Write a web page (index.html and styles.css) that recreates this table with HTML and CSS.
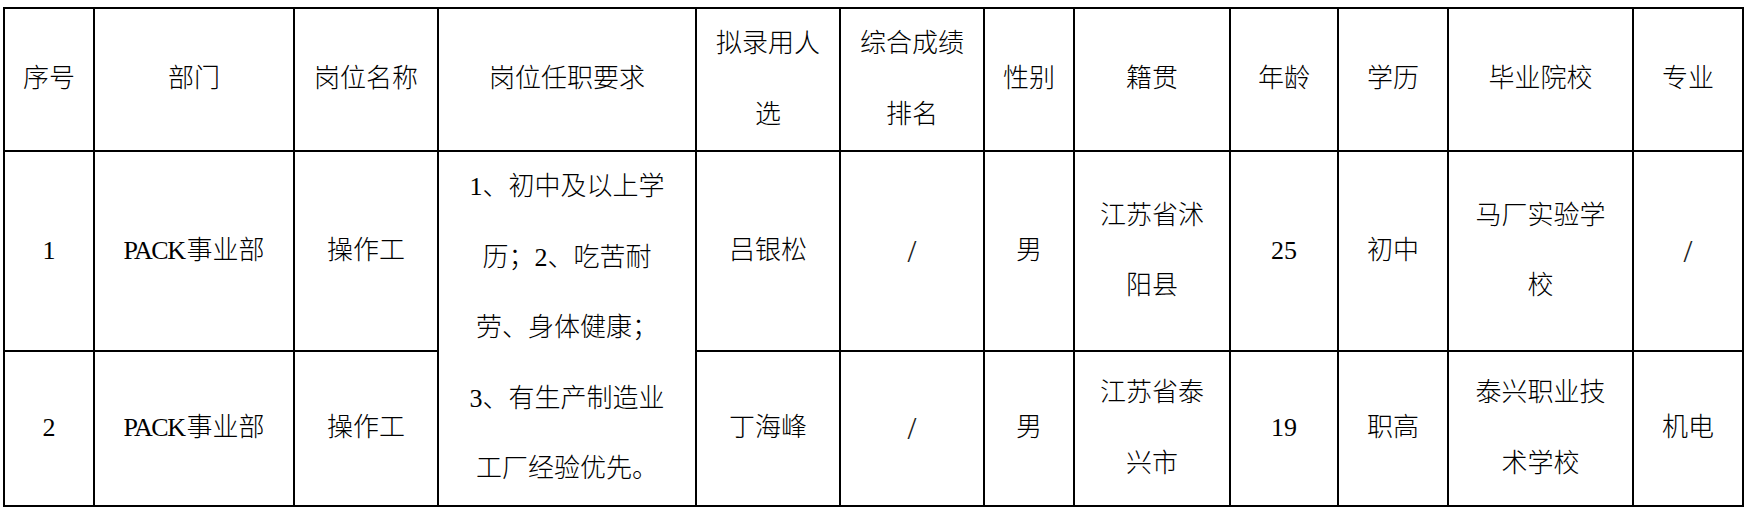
FILE: index.html
```html
<!DOCTYPE html>
<html lang="zh-CN">
<head>
<meta charset="utf-8">
<title>拟录用人选公示</title>
<link rel="stylesheet" href="styles.css">
</head>
<body>
<table class="grid">
  <colgroup>
    <col class="c1"><col class="c2"><col class="c3"><col class="c4"><col class="c5"><col class="c6">
    <col class="c7"><col class="c8"><col class="c9"><col class="c10"><col class="c11"><col class="c12">
  </colgroup>
  <tr class="head">
    <td>序号</td>
    <td>部门</td>
    <td>岗位名称</td>
    <td>岗位任职要求</td>
    <td>拟录用人<br>选</td>
    <td>综合成绩<br>排名</td>
    <td>性别</td>
    <td>籍贯</td>
    <td>年龄</td>
    <td>学历</td>
    <td>毕业院校</td>
    <td>专业</td>
  </tr>
  <tr class="r1">
    <td>1</td>
    <td><span class="lat">PACK</span>事业部</td>
    <td>操作工</td>
    <td rowspan="2">1、初中及以上学<br>历；2、吃苦耐<br>劳、身体健康；<br>3、有生产制造业<br>工厂经验优先。</td>
    <td>吕银松</td>
    <td class="slash">/</td>
    <td>男</td>
    <td>江苏省沭<br>阳县</td>
    <td>25</td>
    <td>初中</td>
    <td>马厂实验学<br>校</td>
    <td class="slash">/</td>
  </tr>
  <tr class="r2">
    <td>2</td>
    <td><span class="lat">PACK</span>事业部</td>
    <td>操作工</td>
    <td>丁海峰</td>
    <td class="slash">/</td>
    <td>男</td>
    <td>江苏省泰<br>兴市</td>
    <td>19</td>
    <td>职高</td>
    <td>泰兴职业技<br>术学校</td>
    <td>机电</td>
  </tr>
</table>
</body>
</html>
```
FILE: styles.css
```css
html, body {
  margin: 0;
  padding: 0;
  background: #fff;
}
body {
  padding: 7px 0 0 3px;
  font-family: "Liberation Serif", "Noto Sans CJK SC", serif;
  font-size: 26px;
  font-weight: 300;
  color: #000;
}
.grid {
  border-collapse: collapse;
  table-layout: fixed;
  width: 1741px;
}
.grid td {
  border: 2px solid #000;
  padding: 0 4px;
  text-align: center;
  vertical-align: middle;
  line-height: 70.5px;
  white-space: nowrap;
}
.c1 { width: 90px; }
.c2 { width: 200px; }
.c3 { width: 144px; }
.c4 { width: 258px; }
.c5 { width: 144px; }
.c6 { width: 144px; }
.c7 { width: 90px; }
.c8 { width: 156px; }
.c9 { width: 108px; }
.c10 { width: 110px; }
.c11 { width: 185px; }
.c12 { width: 110px; }
.head { height: 143px; }
.r1 { height: 200px; }
.r2 { height: 155px; }
.lat { letter-spacing: -1.5px; margin-right: 2px; }
.grid td.slash { font-size: 32px; font-weight: 300; color: #222; }
```
